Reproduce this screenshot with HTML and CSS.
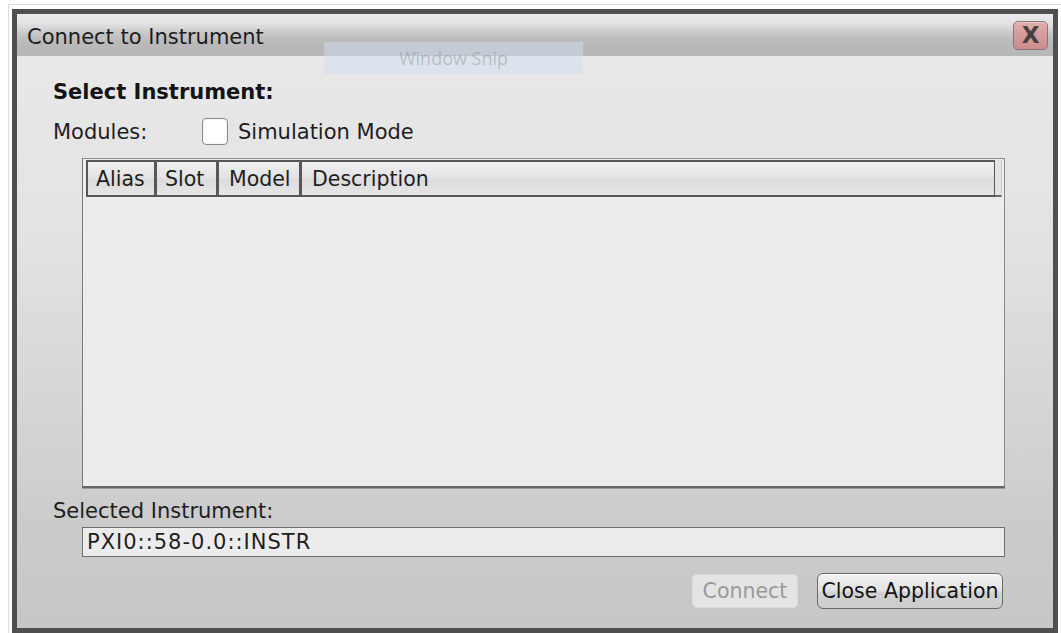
FILE: index.html
```html
<!DOCTYPE html>
<html lang="en">
<head>
<meta charset="utf-8">
<title>Connect to Instrument</title>
<link rel="stylesheet" href="styles.css">
</head>
<body>
<div class="frame">
  <div class="window">
    <div class="titlebar">
      <span class="title">Connect to Instrument</span>
      <button class="close-x" type="button">X</button>
    </div>
    <div class="content">
      <div class="heading">Select Instrument:</div>
      <div class="modules-row">
        <span class="modules-label">Modules:</span>
        <span class="checkbox"></span>
        <span class="check-label">Simulation Mode</span>
      </div>
      <div class="grid">
        <div class="grid-header">
          <div class="col">Alias</div>
          <div class="col">Slot</div>
          <div class="col">Model</div>
          <div class="col">Description</div>
          <div class="col-tail"></div>
        </div>
      </div>
      <div class="selected-label">Selected Instrument:</div>
      <div class="selected-box">PXI0::58-0.0::INSTR</div>
      <div class="actions">
        <button class="btn btn-disabled" type="button">Connect</button>
        <button class="btn" type="button">Close Application</button>
      </div>
    </div>
  </div>
  <div class="snip">Window Snip</div>
</div>
</body>
</html>
```
FILE: styles.css
```css
html, body {
  margin: 0;
  padding: 0;
  background: #ffffff;
  overflow: hidden;
}

body {
  font-family: "DejaVu Sans", Verdana, sans-serif;
  font-size: 21px;
  color: #1e1e1e;
}

.frame {
  position: relative;
  margin: 4px 0 0 8px;
  padding: 4px 0 0 3px;
  border-top: 1px solid #dcdcdc;
  border-left: 1px solid #dcdcdc;
}

.window {
  width: 1036px;
  border: 5px solid #4f4f4f;
  display: flex;
  flex-direction: column;
}

.titlebar {
  height: 42px;
  display: flex;
  align-items: center;
  justify-content: space-between;
  padding: 0 5px 0 10px;
  background: linear-gradient(to bottom, #ebebeb 0%, #e3e3e3 22%, #c2c2c2 52%, #b9b9b9 70%, #b7b7b7 100%);
}

.title {
  padding-top: 3px;
  font-size: 21px;
  color: #1c1c1c;
}

.close-x {
  width: 35px;
  height: 29px;
  margin: 0;
  padding: 0;
  border: 1px solid #8c7474;
  border-radius: 5px;
  background: linear-gradient(to bottom, #e2aeae 0%, #d69a9a 50%, #cc8c8c 100%);
  font-family: "DejaVu Sans", sans-serif;
  font-weight: bold;
  font-size: 23px;
  line-height: 27px;
  color: #474040;
  box-shadow: inset 0 1px 0 rgba(255, 255, 255, 0.35);
}

.content {
  height: 572px;
  box-sizing: border-box;
  padding: 24px 0 0 36px;
  display: flex;
  flex-direction: column;
  background: linear-gradient(to bottom, #e8e8e8 0%, #e3e3e3 30%, #d6d6d6 60%, #cbcbcb 82%, #c7c7c7 100%);
}

.heading {
  font-weight: bold;
  font-size: 21px;
  line-height: 24px;
  color: #141414;
}

.modules-row {
  margin-top: 14px;
  height: 27px;
  display: flex;
  align-items: center;
}

.modules-label {
  width: 149px;
}

.checkbox {
  width: 24px;
  height: 25px;
  background: #ffffff;
  border: 1px solid #8c8c8c;
  border-radius: 4px;
  box-shadow: inset 0 0 2px rgba(0, 0, 0, 0.15);
}

.check-label {
  margin-left: 10px;
}

.grid {
  margin: 13px 0 0 29px;
  width: 918px;
  height: 326px;
  padding: 1px 0 0 3px;
  background: #ececec;
  border-top: 1px solid #8a8a8a;
  border-left: 1px solid #7a7a7a;
  border-right: 1px solid #8a8a8a;
  border-bottom: 2px solid #666666;
  box-shadow: 0 1px 0 #9a9a9a;
}

.grid-header {
  display: flex;
  height: 37px;
}

.col {
  box-sizing: border-box;
  height: 37px;
  padding: 0 0 0 8px;
  display: flex;
  align-items: center;
  font-size: 20.5px;
  border: 2px solid #575757;
  margin-right: -1px;
  background: linear-gradient(to bottom, #efefef 0%, #e4e4e4 45%, #dcdcdc 55%, #e6e6e6 100%);
}

.col:nth-child(1) { width: 70px; }
.col:nth-child(2) { width: 63px; }
.col:nth-child(3) { width: 84px; padding-left: 10px; }
.col:nth-child(4) { width: 696px; padding-left: 10px; }

.col-tail {
  width: 6px;
  height: 35px;
  border-bottom: 2px solid #6a6a6a;
  border-right: 1px solid #c8c8c8;
  background: #e4e4e4;
}

.selected-label {
  margin-top: 11px;
  line-height: 24px;
}

.selected-box {
  margin: 4px 0 0 29px;
  width: 917px;
  height: 28px;
  padding-left: 4px;
  line-height: 28px;
  background: #ececec;
  border: 1px solid #6e6e6e;
  letter-spacing: 1px;
}

.actions {
  margin: 16px 0 0 0;
  width: 950px;
  display: flex;
  justify-content: flex-end;
  align-items: center;
  gap: 19px;
}

.btn {
  height: 36px;
  width: 186px;
  margin: 0;
  padding: 0;
  font-family: "DejaVu Sans", Verdana, sans-serif;
  font-size: 20.5px;
  color: #141414;
  border: 1px solid #6a6a6a;
  border-radius: 6px;
  background: linear-gradient(to bottom, #f2f2f2 0%, #e2e2e2 50%, #d2d2d2 55%, #cdcdcd 100%);
  box-shadow: inset 0 1px 0 #ffffff;
}

.btn-disabled {
  height: 34px;
  width: 106px;
  color: #9a9a9a;
  border: 1px solid #dadada;
  border-radius: 5px;
  background: #e4e4e4;
  box-shadow: none;
}

.snip {
  position: absolute;
  left: 315px;
  top: 37px;
  width: 259px;
  height: 32px;
  background: rgba(208, 222, 240, 0.5);
  color: rgba(100, 100, 100, 0.3);
  font-family: "Open Sans", "DejaVu Sans", sans-serif;
  font-size: 18px;
  line-height: 32px;
  text-align: center;
}
```
